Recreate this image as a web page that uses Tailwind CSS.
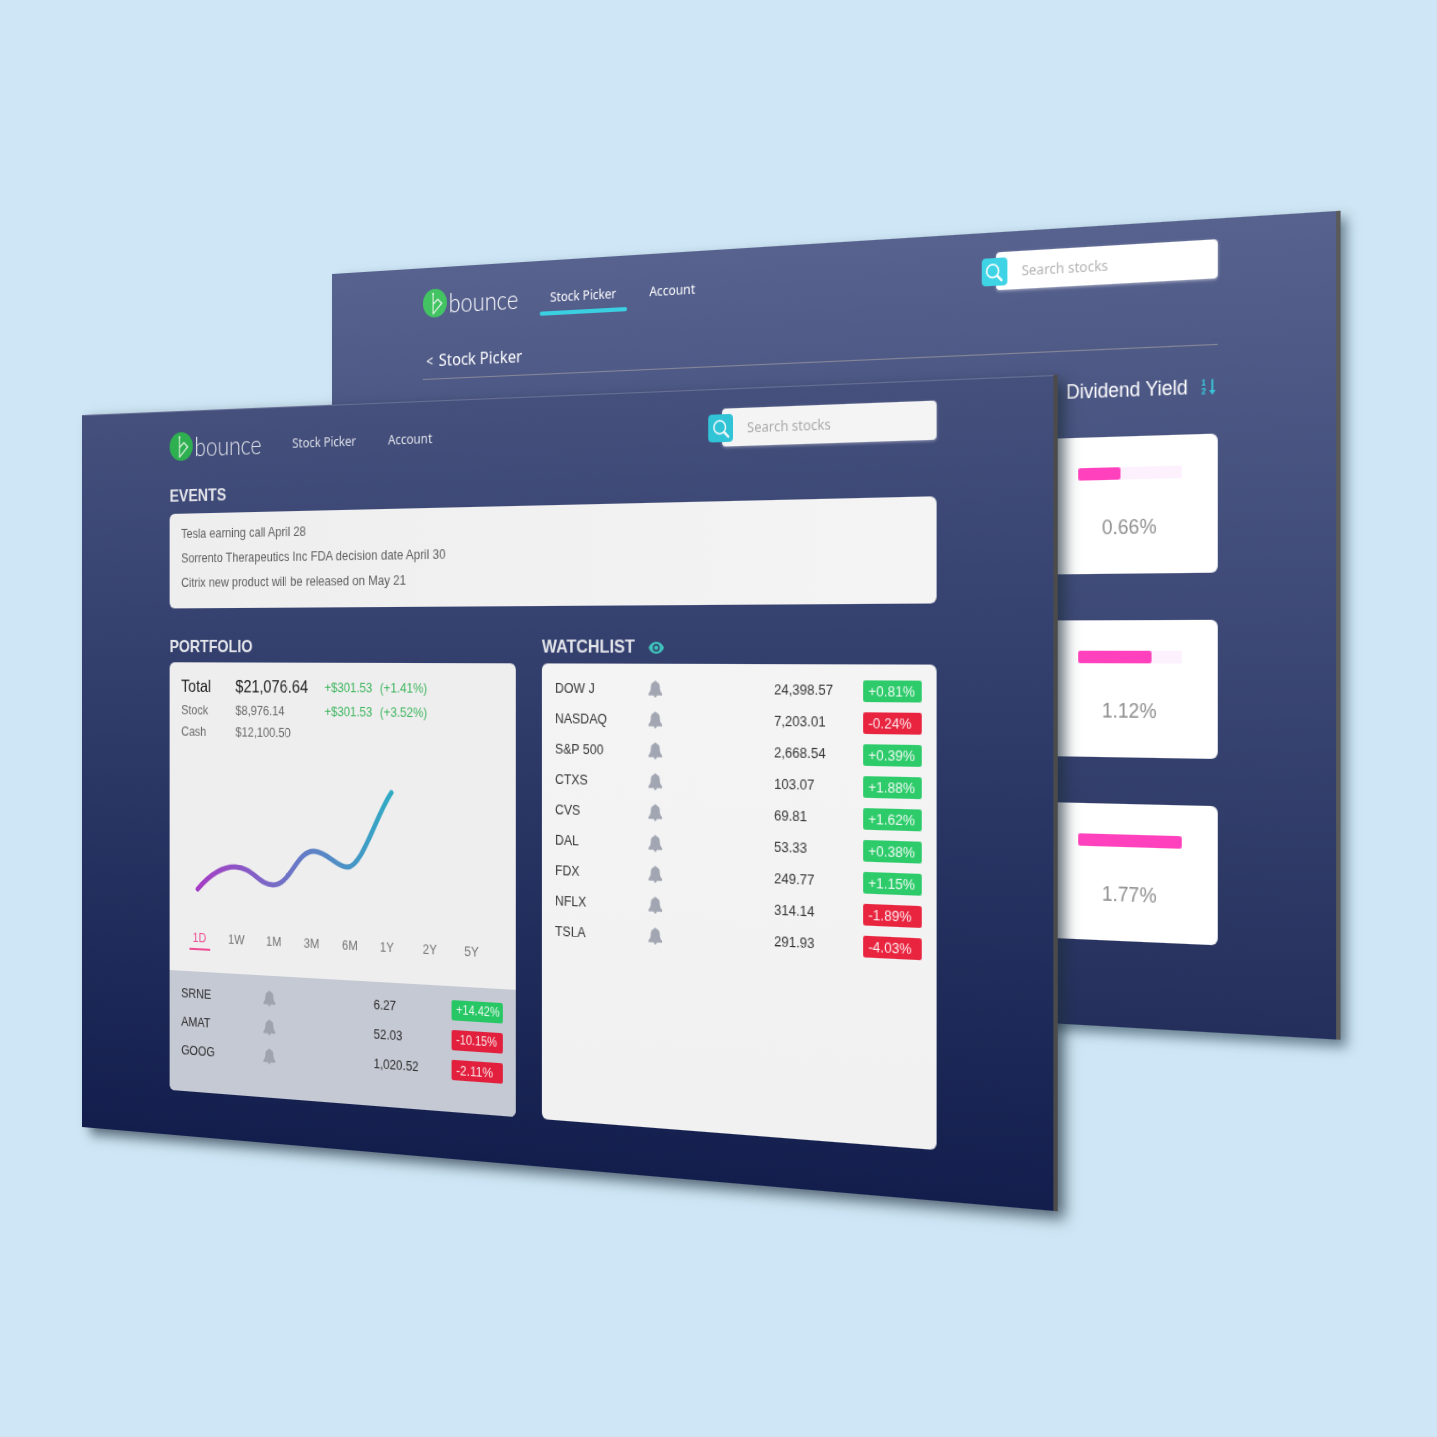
<!DOCTYPE html>
<html lang="en">
<head>
<meta charset="utf-8">
<meta name="viewport" content="width=device-width, initial-scale=1">
<title>bounce</title>
<script src="https://cdn.jsdelivr.net/npm/@tailwindcss/browser@4"></script>
</head>
<body>
<svg class="hidden" aria-hidden="true">
  <symbol id="logo" viewBox="0 0 28 28">
    <circle cx="14" cy="14" r="14" fill="currentColor"/>
    <g fill="none" stroke="#e9f5ec" stroke-width="1.2" stroke-linejoin="round" stroke-linecap="round">
      <path d="M12 5v19.3L21.8 14.5 17.3 10.3 12 15"/>
    </g>
    <circle cx="12" cy="4.8" r="1.1" fill="#e9f5ec"/><circle cx="21.6" cy="14.5" r=".8" fill="#e9f5ec"/>
  </symbol>
  <symbol id="bell" viewBox="0 0 14 16">
    <path fill="currentColor" d="M7 .5c.8 0 1.300.4 1.500 1 2.100.6 3.100 2.200 3.100 4.300 0 2.900.5 4.400 2.400 6.200v1.700H8.500C8.400 14.900 7.800 15.600 7 15.600s-1.400-.7-1.500-1.900H0v-1.700c1.900-1.800 2.400-3.300 2.400-6.200 0-2.100 1-3.700 3.100-4.300.2-.6.700-1 1.500-1z"/>
  </symbol>
  <symbol id="lens" viewBox="0 0 16 16">
    <g fill="none" stroke="currentColor" stroke-linecap="round"><circle cx="6.800" cy="6.800" r="5.200" stroke-width="1.400"/><path d="M11 11l3.500 3.500" stroke-width="2"/></g>
  </symbol>
</svg>

<main class="relative min-h-screen w-full overflow-hidden bg-[#cee6f5] font-['Liberation_Sans',Arial,sans-serif]">

  <!-- Stock picker window (behind) -->
  <section aria-label="Stock picker" class="absolute top-[274px] left-[23.1%] w-[72%] origin-[0_370px] [transform:perspective(3980px)_rotateY(-34deg)] bg-linear-to-b from-[#57628f] to-[#242f5c] pr-[106px] pb-19 pl-27 shadow-[4px_0_0_#5a5a5a,9px_6px_10px_rgba(50,75,90,0.65)]">
    <header class="flex h-[70px] items-center gap-9 text-white">
      <a href="#" class="flex items-center gap-0.5"><svg class="size-7 text-[#43c463]"><use href="#logo"/></svg><span class="font-[Lato,sans-serif] text-[25px] leading-7 font-light">bounce</span></a>
      <nav class="flex gap-9 font-['Noto_Sans',sans-serif] text-[13px] leading-5">
        <a href="#" class="relative">Stock Picker<span class="absolute -inset-x-3 -bottom-2 h-1 rounded-full bg-[#3ad0e2]"></span></a>
        <a href="#">Account</a>
      </nav>
      <form class="relative ml-auto">
        <input type="search" aria-label="Search stocks" placeholder="Search stocks" class="block h-[34px] w-[209px] rounded-sm bg-white pl-[25px] font-['Noto_Sans',sans-serif] text-[13px] shadow-[0_1px_3px_rgba(255,255,255,0.5)] placeholder:text-[#b3b3b3]">
        <button type="button" aria-label="Search" class="absolute top-[5px] -left-3.5 grid size-[25px] place-items-center rounded-sm bg-[#3fd3e6] text-white"><svg class="size-[18px]"><use href="#lens"/></svg></button>
      </form>
    </header>
    <h1 class="border-b border-[#868797] pt-2 pb-1 pl-1 font-['Noto_Sans',sans-serif] text-[17px] leading-[26px] text-white"><a href="#"><span class="mr-0.5 text-[14px]">&lt;</span> Stock Picker</a></h1>
    <div class="mt-6 mb-[29px] flex h-6 items-center justify-end gap-3 pr-0.5 text-[18px] text-white">
      <span>Dividend Yield</span>
      <button type="button" aria-label="Sort by dividend yield" class="text-[#3ac6da]">
        <svg class="h-3.5 w-[13px]" viewBox="0 0 13 14" fill="none" stroke="currentColor" stroke-width="1.200"><path d="M.8 1.800L2.200 1v4.500M.6 5.400h3M.7 9.500c.2-1.500 2.800-1.500 2.800 0 0 1-2.700 2-2.700 3.500h3"/><path d="M10 .5v11" stroke-width="1.700"/><path d="M7 10h6L10 14z" fill="currentColor" stroke="none"/></svg>
      </button>
    </div>
    <ul class="flex flex-col gap-[41px] text-center text-[18px] text-[#8e8e8e]">
      <li class="flex h-[121px] flex-col items-end rounded-md bg-white pt-[27px] pr-[33px]"><div class="h-[11px] w-[97px] bg-[#fdf1fd]"><div class="h-full rounded-xs bg-[#ff41bd]" style="width:42%"></div></div><span class="mt-[30px] w-[97px] leading-6">0.66%</span></li>
      <li class="flex h-[121px] flex-col items-end rounded-md bg-white pt-[27px] pr-[33px]"><div class="h-[11px] w-[97px] bg-[#fdf1fd]"><div class="h-full rounded-xs bg-[#ff41bd]" style="width:72%"></div></div><span class="mt-[30px] w-[97px] leading-6">1.12%</span></li>
      <li class="flex h-[121px] flex-col items-end rounded-md bg-white pt-[27px] pr-[33px]"><div class="h-[11px] w-[97px] bg-[#fdf1fd]"><div class="h-full rounded-xs bg-[#ff41bd]" style="width:100%"></div></div><span class="mt-[30px] w-[97px] leading-6">1.77%</span></li>
    </ul>
  </section>

  <!-- Dashboard window (front) -->
  <section aria-label="Dashboard" class="absolute top-[415px] left-[5.7%] w-[72.1%] origin-[0_230px] [transform:perspective(4206px)_rotateY(-37deg)] bg-linear-to-b from-[#45507d] to-[#131e4d] px-27 pb-11 text-[13px] shadow-[inset_0_1px_0_rgba(255,255,255,0.18),4px_0_0_#4b4b4b,10px_6px_12px_rgba(30,45,60,0.7)]">
    <header class="flex h-[70px] items-center gap-9 text-[#dfe1e8]">
      <a href="#" class="flex items-center gap-0.5"><svg class="size-7 text-[#2fb050]"><use href="#logo"/></svg><span class="font-[Lato,sans-serif] text-[25px] leading-7 font-light">bounce</span></a>
      <nav class="flex gap-9 font-['Noto_Sans',sans-serif] text-[13px] leading-5">
        <a href="#">Stock Picker</a>
        <a href="#">Account</a>
      </nav>
      <form class="relative ml-auto">
        <input type="search" aria-label="Search stocks" placeholder="Search stocks" class="block h-[34px] w-[209px] rounded-sm bg-[#f4f4f4] pl-[25px] font-['Noto_Sans',sans-serif] text-[13px] shadow-[0_1px_3px_rgba(255,255,255,0.4)] placeholder:text-[#ababab]">
        <button type="button" aria-label="Search" class="absolute top-[5px] -left-3.5 grid size-[25px] place-items-center rounded-sm bg-[#31c3d6] text-[#eef8f9]"><svg class="size-[18px]"><use href="#lens"/></svg></button>
      </form>
    </header>

    <h2 class="mt-0.5 mb-[5px] text-[17px] leading-6 font-bold text-[#e3e4ea]">EVENTS</h2>
    <ul class="rounded-md bg-linear-to-r from-[#eeeeee] to-[#f4f4f4] px-3.5 pt-2 pb-[13px] leading-6 text-[#5f5f5f]">
      <li>Tesla earning call April 28</li>
      <li>Sorrento Therapeutics Inc FDA decision date April 30</li>
      <li>Citrix new product will be released on May 21</li>
    </ul>

    <div class="mt-[26px] grid grid-cols-2 gap-x-7">
      <section class="flex flex-col">
        <h2 class="mb-[3px] text-[17px] leading-6 font-bold text-[#e3e4ea]">PORTFOLIO</h2>
        <div class="flex flex-1 flex-col overflow-hidden rounded-md bg-[#eeeeee] pt-3">
          <table class="mx-3.5 table-fixed text-left leading-[21px] text-[#6b6b6b]">
            <tr class="leading-6"><th scope="row" class="w-[65px] text-[17px] font-normal text-[#1c1c1c]">Total</th><td class="w-[104px] text-[17px] text-[#1c1c1c]">$21,076.64</td><td class="w-[63px] text-[#3fb65f]">+$301.53</td><td class="text-[#3fb65f]">(+1.41%)</td></tr>
            <tr><th scope="row" class="font-normal">Stock</th><td>$8,976.14</td><td class="text-[#3fb65f]">+$301.53</td><td class="text-[#3fb65f]">(+3.52%)</td></tr>
            <tr><th scope="row" class="font-normal">Cash</th><td>$12,100.50</td><td></td><td></td></tr>
          </table>
          <svg class="h-[182px] w-full" viewBox="0 0 396 182" fill="none" role="img" aria-label="Portfolio value">
            <defs><linearGradient id="trend" x1="34" y1="0" x2="259" y2="0" gradientUnits="userSpaceOnUse"><stop offset="0" stop-color="#a63cc5"/><stop offset=".5" stop-color="#6b76c6"/><stop offset="1" stop-color="#2fabc4"/></linearGradient></defs>
            <path d="M34 144C48 130 62 121 79 121C100 121 106 137 123 137C144 137 150 103 171 103C186 103 196 117 209 117C226 117 242 66 259 45" stroke="url(#trend)" stroke-width="5" stroke-linecap="round"/>
          </svg>
          <div class="flex px-3.5 pb-[21px] text-[#757575]">
            <div class="flex w-11 justify-center"><button type="button" class="h-[22px] w-[25px] border-b-2 border-[#ee4d93] leading-5 text-[#ee4d93]">1D</button></div>
            <button type="button" class="h-5 w-11 leading-5">1W</button>
            <button type="button" class="h-5 w-11 leading-5">1M</button>
            <button type="button" class="h-5 w-11 leading-5">3M</button>
            <button type="button" class="h-5 w-11 leading-5">6M</button>
            <button type="button" class="h-5 w-10 leading-5">1Y</button>
            <button type="button" class="ml-1 h-5 w-12 leading-5">2Y</button>
            <button type="button" class="h-5 w-11 leading-5">5Y</button>
          </div>
          <div class="flex-1 bg-[#c5c9d3] px-3.5 pt-2 pb-[26px]">
            <table class="w-full table-fixed text-left text-[#2c2c2c]">
              <tr class="h-7"><th scope="row" class="w-[98px] font-normal">SRNE</th><td class="w-[127px]"><svg class="h-4 w-3.5 text-[#9fa3ad]"><use href="#bell"/></svg></td><td class="w-[87px]">6.27</td><td><span class="block h-[19px] rounded-xs bg-[#27c765] pl-[5px] text-[12px] leading-[19px] text-[#eaf7ee]">+14.42%</span></td></tr>
              <tr class="h-7"><th scope="row" class="font-normal">AMAT</th><td><svg class="h-4 w-3.5 text-[#9fa3ad]"><use href="#bell"/></svg></td><td>52.03</td><td><span class="block h-[19px] rounded-xs bg-[#e21f3c] pl-[5px] text-[12px] leading-[19px] text-[#f9e6e9]">-10.15%</span></td></tr>
              <tr class="h-7"><th scope="row" class="font-normal">GOOG</th><td><svg class="h-4 w-3.5 text-[#9fa3ad]"><use href="#bell"/></svg></td><td>1,020.52</td><td><span class="block h-[19px] rounded-xs bg-[#e21f3c] pl-[5px] leading-[19px] text-[#f9e6e9]">-2.11%</span></td></tr>
            </table>
          </div>
        </div>
      </section>

      <section class="flex flex-col">
        <h2 class="mb-[3px] flex items-center gap-3.5 text-[17px] leading-6 font-bold text-[#e3e4ea]">WATCHLIST
          <svg class="h-[11px] w-4 text-[#3fc4bd]" viewBox="0 0 16 11"><path fill="currentColor" fill-rule="evenodd" d="M8 0c3.500 0 6.500 2.200 8 5.500-1.500 3.300-4.500 5.500-8 5.500S1.500 8.800 0 5.500C1.500 2.200 4.500 0 8 0zm0 1.900a3.600 3.600 0 100 7.200 3.600 3.600 0 000-7.200z"/><circle cx="8" cy="5.500" r="2.100" fill="currentColor"/></svg>
        </h2>
        <div class="flex-1 rounded-md bg-linear-to-b from-[#f4f4f4] to-[#f1f1f1] px-3.5 pt-[9px]">
          <table class="w-full table-fixed text-left text-[#363636]">
            <tr class="h-7"><th scope="row" class="w-[98px] font-normal">DOW J</th><td class="w-[127px]"><svg class="h-4 w-3.5 text-[#a1a6b2]"><use href="#bell"/></svg></td><td class="w-[87px]">24,398.57</td><td><span class="block h-[19px] rounded-xs bg-[#2ecb6b] pl-[5px] leading-[19px] text-[#effaf3]">+0.81%</span></td></tr>
            <tr class="h-7"><th scope="row" class="font-normal">NASDAQ</th><td><svg class="h-4 w-3.5 text-[#a1a6b2]"><use href="#bell"/></svg></td><td>7,203.01</td><td><span class="block h-[19px] rounded-xs bg-[#e8243f] pl-[5px] leading-[19px] text-[#fcebee]">-0.24%</span></td></tr>
            <tr class="h-7"><th scope="row" class="font-normal">S&amp;P 500</th><td><svg class="h-4 w-3.5 text-[#a1a6b2]"><use href="#bell"/></svg></td><td>2,668.54</td><td><span class="block h-[19px] rounded-xs bg-[#2ecb6b] pl-[5px] leading-[19px] text-[#effaf3]">+0.39%</span></td></tr>
            <tr class="h-7"><th scope="row" class="font-normal">CTXS</th><td><svg class="h-4 w-3.5 text-[#a1a6b2]"><use href="#bell"/></svg></td><td>103.07</td><td><span class="block h-[19px] rounded-xs bg-[#2ecb6b] pl-[5px] leading-[19px] text-[#effaf3]">+1.88%</span></td></tr>
            <tr class="h-7"><th scope="row" class="font-normal">CVS</th><td><svg class="h-4 w-3.5 text-[#a1a6b2]"><use href="#bell"/></svg></td><td>69.81</td><td><span class="block h-[19px] rounded-xs bg-[#2ecb6b] pl-[5px] leading-[19px] text-[#effaf3]">+1.62%</span></td></tr>
            <tr class="h-7"><th scope="row" class="font-normal">DAL</th><td><svg class="h-4 w-3.5 text-[#a1a6b2]"><use href="#bell"/></svg></td><td>53.33</td><td><span class="block h-[19px] rounded-xs bg-[#2ecb6b] pl-[5px] leading-[19px] text-[#effaf3]">+0.38%</span></td></tr>
            <tr class="h-7"><th scope="row" class="font-normal">FDX</th><td><svg class="h-4 w-3.5 text-[#a1a6b2]"><use href="#bell"/></svg></td><td>249.77</td><td><span class="block h-[19px] rounded-xs bg-[#2ecb6b] pl-[5px] leading-[19px] text-[#effaf3]">+1.15%</span></td></tr>
            <tr class="h-7"><th scope="row" class="font-normal">NFLX</th><td><svg class="h-4 w-3.5 text-[#a1a6b2]"><use href="#bell"/></svg></td><td>314.14</td><td><span class="block h-[19px] rounded-xs bg-[#e8243f] pl-[5px] leading-[19px] text-[#fcebee]">-1.89%</span></td></tr>
            <tr class="h-7"><th scope="row" class="font-normal">TSLA</th><td><svg class="h-4 w-3.5 text-[#a1a6b2]"><use href="#bell"/></svg></td><td>291.93</td><td><span class="block h-[19px] rounded-xs bg-[#e8243f] pl-[5px] leading-[19px] text-[#fcebee]">-4.03%</span></td></tr>
          </table>
        </div>
      </section>
    </div>
  </section>
</main>
</body>
</html>
